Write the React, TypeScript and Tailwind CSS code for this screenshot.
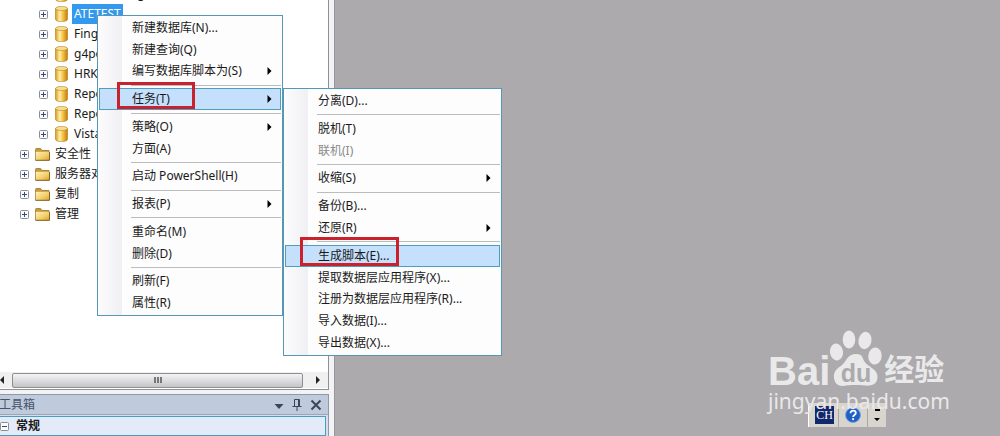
import clsx from 'clsx';

interface TreeItem {
  label: string;
  kind: 'database' | 'folder';
  selected?: boolean;
}

interface MenuEntry {
  label?: string;
  submenu?: boolean;
  active?: boolean;
  disabled?: boolean;
}

const treeItems: TreeItem[] = [
  { label: 'ActiveConfig', kind: 'database' },
  { label: 'ATETEST', kind: 'database', selected: true },
  { label: 'Finge', kind: 'database' },
  { label: 'g4po', kind: 'database' },
  { label: 'HRK', kind: 'database' },
  { label: 'Repo', kind: 'database' },
  { label: 'Repo', kind: 'database' },
  { label: 'Vista', kind: 'database' },
  { label: '安全性', kind: 'folder' },
  { label: '服务器对象', kind: 'folder' },
  { label: '复制', kind: 'folder' },
  { label: '管理', kind: 'folder' },
];

// an entry without a label is a separator
const databaseMenu: MenuEntry[] = [
  { label: '新建数据库(N)...' },
  { label: '新建查询(Q)' },
  { label: '编写数据库脚本为(S)', submenu: true },
  {},
  { label: '任务(T)', submenu: true, active: true },
  {},
  { label: '策略(O)', submenu: true },
  { label: '方面(A)' },
  {},
  { label: '启动 PowerShell(H)' },
  {},
  { label: '报表(P)', submenu: true },
  {},
  { label: '重命名(M)' },
  { label: '删除(D)' },
  {},
  { label: '刷新(F)' },
  { label: '属性(R)' },
];

const taskMenu: MenuEntry[] = [
  { label: '分离(D)...' },
  {},
  { label: '脱机(T)' },
  { label: '联机(I)', disabled: true },
  {},
  { label: '收缩(S)', submenu: true },
  {},
  { label: '备份(B)...' },
  { label: '还原(R)', submenu: true },
  {},
  { label: '生成脚本(E)...', active: true },
  { label: '提取数据层应用程序(X)...' },
  { label: '注册为数据层应用程序(R)...' },
  { label: '导入数据(I)...' },
  { label: '导出数据(X)...' },
];

function DatabaseIcon() {
  return (
    <svg className="h-4 w-[13px] shrink-0" viewBox="0 0 13 16">
      <defs>
        <linearGradient id="db" x1="0" x2="1">
          <stop offset="0" stopColor="#dc9a1c" />
          <stop offset="0.35" stopColor="#fff0a8" />
          <stop offset="0.65" stopColor="#f2bd3c" />
          <stop offset="1" stopColor="#c07c0c" />
        </linearGradient>
      </defs>
      <path d="M.5 2.6v10.6c0 1.5 2.6 2.4 6 2.4s6-.9 6-2.4V2.6z" fill="url(#db)" stroke="#b07c20" strokeWidth=".6" />
      <ellipse cx="6.5" cy="2.5" rx="6" ry="2.1" fill="#f7dc8c" stroke="#b5852c" strokeWidth=".6" />
    </svg>
  );
}

function FolderIcon() {
  return (
    <svg className="h-[13px] w-[15px] shrink-0" viewBox="0 0 15 13">
      <defs>
        <linearGradient id="folder" x1="0" y1="0" x2="1" y2="1">
          <stop offset="0" stopColor="#fff3b8" />
          <stop offset="0.6" stopColor="#f3cd68" />
          <stop offset="1" stopColor="#dc9f30" />
        </linearGradient>
      </defs>
      <path d="M.5 12V1.5q0-1 1-1h4l1.5 2h7v9.5z" fill="#c99a3c" stroke="#98742c" strokeWidth=".8" />
      <path d="M.8 3.8h13.4v8.4H.8z" fill="url(#folder)" />
      <path d="M.5 12.3h14V4" fill="none" stroke="#7a5818" strokeWidth=".9" />
    </svg>
  );
}

function Expander({ open = false }: { open?: boolean }) {
  return (
    <svg className="size-[9px] shrink-0" viewBox="0 0 9 9">
      <rect x=".5" y=".5" width="8" height="8" rx="1" fill="#fafafa" stroke="#8c8e94" />
      <path d={open ? 'M2 4.5h5' : 'M2 4.5h5M4.5 2v5'} stroke="#384a80" />
    </svg>
  );
}

function TreeRow({ item }: { item: TreeItem }) {
  const isDatabase = item.kind === 'database';
  return (
    <li className={clsx('flex h-5 items-center', isDatabase ? 'pl-[39px]' : 'pl-5')}>
      <Expander />
      <span className={clsx('shrink-0', isDatabase ? 'w-[7px]' : 'w-[6px]')} />
      {isDatabase ? <DatabaseIcon /> : <FolderIcon />}
      <span
        className={clsx(
          'h-5 px-[2px] leading-5 whitespace-nowrap',
          isDatabase ? 'ml-1' : 'ml-[3px]',
          item.selected && 'bg-[#3399ee] text-white',
        )}
      >
        {item.label}
      </span>
    </li>
  );
}

function Menu({ label, entries, className }: { label: string; entries: MenuEntry[]; className: string }) {
  return (
    <div
      role="menu"
      aria-label={label}
      className={clsx('absolute flex flex-col border border-[#5597b4] bg-[#fdfdfd] p-px', className)}
    >
      <div className="absolute inset-y-0 left-0 w-6 bg-linear-to-r from-[#fcfcfd] to-[#f0eff3]" />
      {entries.map((entry, index) =>
        entry.label ? (
          <button
            key={index}
            type="button"
            role="menuitem"
            disabled={entry.disabled}
            className={clsx(
              'relative flex h-[22px] items-center justify-between border pr-2 pl-8 text-left leading-4',
              entry.active ? 'border-[#4f9dbb] bg-[#c5e0fd]' : 'border-transparent',
              entry.disabled && 'text-[#8a8a8a]',
            )}
          >
            {entry.label}
            {entry.submenu && (
              <svg className="h-2 w-[5px]" viewBox="0 0 5 8">
                <path d="M.5 0l4 4-4 4z" fill="#000" />
              </svg>
            )}
          </button>
        ) : (
          <div key={index} role="separator" className="flex h-[6px] items-center pl-8">
            <div className="h-px w-full bg-[#bcbcbe]" />
          </div>
        ),
      )}
    </div>
  );
}

function ObjectExplorer() {
  return (
    <section className="flex min-h-0 flex-1 flex-col overflow-hidden border-r border-b border-[#8e9096] bg-white">
      <ul className="-mt-4 min-h-0 flex-1 overflow-hidden">
        {treeItems.map((item, index) => (
          <TreeRow key={index} item={item} />
        ))}
      </ul>
      <div className="mb-px flex h-4 shrink-0 items-center bg-[#f1f0f1]">
        <button type="button" aria-label="向左滚动" className="flex h-4 w-3 items-center">
          <svg className="h-2 w-1" viewBox="0 0 4 8">
            <path d="M4 0v8L0 4z" fill="#222" />
          </svg>
        </button>
        <div className="flex h-[15px] flex-1 items-center justify-center gap-px rounded-xs border border-[#8f8f92] bg-linear-to-b from-[#f3f3f4] via-[#dddddf] to-[#c4c4c7]">
          <span className="h-[6px] w-[2px] bg-[#777]" />
          <span className="h-[6px] w-[2px] bg-[#777]" />
          <span className="h-[6px] w-[2px] bg-[#777]" />
        </div>
        <button type="button" aria-label="向右滚动" className="flex h-4 w-[25px] items-center justify-center pl-1">
          <svg className="h-2 w-1" viewBox="0 0 4 8">
            <path d="M0 0v8l4-4z" fill="#222" />
          </svg>
        </button>
      </div>
    </section>
  );
}

function Toolbox() {
  return (
    <section className="mt-1 flex h-[42px] shrink-0 flex-col border-t border-r border-[#8f98a8] bg-[#d5deec]">
      <header className="flex h-5 items-center justify-between border-b border-[#9aa5b6] bg-[#bfcbdc] pr-[6px] text-[#47536a]">
        <h2 className="-ml-px">工具箱</h2>
        <div className="flex items-center gap-2">
          <button type="button" aria-label="窗口位置">
            <svg className="h-3 w-[10px]" viewBox="0 0 10 12">
              <path d="M.5 5h9L5 10z" fill="#3c4658" />
            </svg>
          </button>
          <button type="button" aria-label="自动隐藏">
            <svg className="h-3 w-[10px]" viewBox="0 0 10 12" fill="none" stroke="#3c4658">
              <path d="M2.5 7V.5h5V7M.5 7.5h9M5 8v4M6.5 1v6" />
            </svg>
          </button>
          <button type="button" aria-label="关闭">
            <svg className="size-3" viewBox="0 0 12 12" fill="none" stroke="#3c4658" strokeWidth="2">
              <path d="M1.5 1.5l9 9M10.5 1.5l-9 9" />
            </svg>
          </button>
        </div>
      </header>
      <button
        type="button"
        className="mt-px mr-[2px] flex h-5 items-center gap-[7px] border border-l-0 border-[#4a9dbc] bg-[#e3ebf9] font-bold"
      >
        <Expander open />
        常规
      </button>
    </section>
  );
}

function LanguageBar() {
  return (
    <div className="absolute right-[114px] bottom-[9px] flex h-6 w-[78px] items-stretch bg-[#d8d5cf]">
      <span className="mr-[2px] w-px bg-white" />
      <button type="button" className="flex w-7 items-center justify-center border-r border-[#aaa8a5]">
        <span className="flex h-[18px] w-[19px] items-center justify-center bg-[#11286c] font-['Liberation_Serif',serif] text-xs leading-4 text-white">
          CH
        </span>
      </button>
      <button type="button" aria-label="帮助" className="flex flex-1 items-center justify-center border-r border-[#aaa8a5]">
        <svg className="size-4" viewBox="0 0 16 16">
          <circle cx="8" cy="8" r="7.5" fill="#1f5fc8" stroke="#7fa5e0" />
          <path d="M5.5 6.2C5.5 2.7 10.8 3 10.8 6c0 2-2.7 2-2.7 4" fill="none" stroke="#fff" strokeWidth="1.8" />
          <circle cx="8.1" cy="12.2" r="1.1" fill="#fff" />
        </svg>
      </button>
      <button type="button" aria-label="选项" className="flex w-[18px] items-center justify-center">
        <svg className="h-3 w-[6px]" viewBox="0 0 6 12">
          <path d="M1 0h5v2H1zM0 9h6l-3 3z" fill="#000" />
        </svg>
      </button>
    </div>
  );
}

function Watermark() {
  return (
    <div className="absolute right-[54px] bottom-[21px] flex w-[178px] flex-col text-[#e9e9ea]">
      <div className="flex h-[60px] items-end">
        <span className="font-['Liberation_Sans',sans-serif] text-[40px] leading-8 font-bold">Bai</span>
        <svg className="h-[60px] w-[54px] shrink-0" viewBox="0 0 54 60" fill="currentColor">
          <ellipse cx="6.5" cy="25" rx="6.5" ry="8.5" transform="rotate(-8 6.5 25)" />
          <ellipse cx="19" cy="12.5" rx="6.3" ry="9" />
          <ellipse cx="35" cy="13.5" rx="6.5" ry="8.7" transform="rotate(10 35 13.5)" />
          <ellipse cx="45" cy="29" rx="6.7" ry="8.5" transform="rotate(6 45 29)" />
          <path d="M26 27c-8 0-9 6-13 10S3 43 4 51s7 8.500 12 7.500 14-.5 19 0 12 0 12.500-8-8-10-12-14.500S34 27 26 27z" />
          <text x="26" y="55" textAnchor="middle" fill="#acaaad" fontFamily="Liberation Sans, sans-serif" fontSize="25" fontWeight="700">
            du
          </text>
        </svg>
        <span className="text-[30px] leading-9 font-bold whitespace-nowrap">经验</span>
      </div>
      <a href="#" className="text-[21px] leading-7">
        jingyan.baidu.com
      </a>
    </div>
  );
}

export default function App() {
  return (
    <div className="relative flex h-screen overflow-hidden bg-[#acaaad] font-['Noto_Sans','Noto_Sans_CJK_SC',sans-serif] text-xs text-[#1a1a1a]">
      <aside className="flex w-[335px] shrink-0 flex-col border-r border-[#96969c] bg-[#f3f3f6] pr-[5px]">
        <ObjectExplorer />
        <Toolbox />
      </aside>
      <main className="flex-1" />

      <LanguageBar />
      <Watermark />

      <Menu label="数据库" entries={databaseMenu} className="top-[15px] left-[97px] h-[301px] w-[186px]" />
      <Menu label="任务" entries={taskMenu} className="top-[88px] left-[283px] h-[268px] w-[219px]" />

      {/* Highlight boxes */}
      <div className="pointer-events-none absolute top-[82px] left-[117px] h-[27px] w-[78px] border-3 border-[#c9222c]" />
      <div className="pointer-events-none absolute top-[237px] left-[300px] h-[29px] w-[99px] border-3 border-[#c9222c]" />
    </div>
  );
}
